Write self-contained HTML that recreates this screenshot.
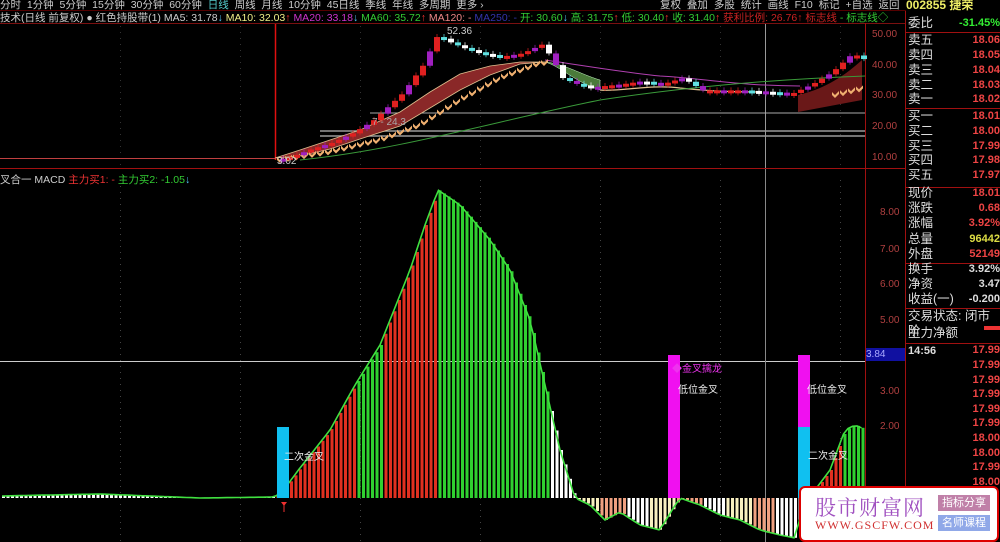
<!DOCTYPE html><html><head><meta charset="utf-8"><style>
*{margin:0;padding:0}body{width:1000px;height:542px;background:#000;overflow:hidden;position:relative;font-family:"Liberation Sans","Noto Sans CJK SC",sans-serif;}
.t{position:absolute;white-space:nowrap;font-size:11px;line-height:12px}
#info div{position:absolute;left:908px;width:92px;font-size:12.5px;color:#ddd;height:15px;line-height:15px}
#info b{position:absolute;right:0;font-weight:bold;font-size:11px}
</style></head><body>
<svg id="s" width="1000" height="542" style="position:absolute;left:0;top:0"></svg>
<div class="t" style="left:0;top:-1px;color:#ccc;font-size:10.5px">分时 &nbsp;1分钟 &nbsp;5分钟 &nbsp;15分钟 &nbsp;30分钟 &nbsp;60分钟 &nbsp;<span style="color:#5cc">日线</span> &nbsp;周线 &nbsp;月线 &nbsp;10分钟 &nbsp;45日线 &nbsp;季线 &nbsp;年线 &nbsp;多周期 &nbsp;更多 ›</div>
<div class="t" style="left:660px;top:-1px;color:#ccc;font-size:10.5px;word-spacing:3px">复权 叠加 多股 统计 画线 F10 标记 +自选 返回</div>
<div class="t" style="left:906px;top:-1px;color:#ee6;font-weight:bold;font-size:12px;background:#000;width:94px">002855 捷荣</div>
<div class="t" style="left:0;top:12px;color:#ccc;font-size:10.5px">技术(日线 前复权) ● 红色持股带(1) MA5: 31.78<span style="color:#5cf">↓</span> <span style="color:#ee8">MA10: 32.03</span><span style="color:#f33">↑</span> <span style="color:#c3c">MA20: 33.18</span><span style="color:#5cf">↓</span> <span style="color:#3c3">MA60: 35.72</span><span style="color:#f33">↑</span> <span style="color:#e88">MA120: -</span> <span style="color:#33a">MA250: -</span> <span style="color:#3c3">开: 30.60</span><span style="color:#5cf">↓</span> <span style="color:#3c3">高: 31.75</span><span style="color:#f33">↑</span> <span style="color:#3c3">低: 30.40</span><span style="color:#f33">↑</span> <span style="color:#3c3">收: 31.40</span><span style="color:#f33">↑</span> <span style="color:#c22">获利比例: 26.76↑ 标志线</span> <span style="color:#3c3">- 标志线◇</span></div>
<div class="t" style="left:0;top:174px;color:#ccc;font-size:10.5px">叉合一 MACD <span style="color:#e33">主力买1: -</span> <span style="color:#3c3">主力买2: -1.05</span><span style="color:#5cf">↓</span></div>
<div class="t" style="left:277px;top:156px;color:#ccc;font-size:10px">3.02</div>
<div class="t" style="left:447px;top:26px;color:#ccc;font-size:10px">52.36</div>
<div class="t" style="left:372px;top:117px;color:#aaa;font-size:10px">7 - 24.3</div>
<div class="t" style="left:284px;top:452px;color:#eee;font-size:10px">二次金叉</div>
<div class="t" style="left:672px;top:364px;color:#e3e;font-size:10px">◆金叉擒龙</div>
<div class="t" style="left:678px;top:385px;color:#eee;font-size:10px">低位金叉</div>
<div class="t" style="left:807px;top:385px;color:#eee;font-size:10px">低位金叉</div>
<div class="t" style="left:808px;top:451px;color:#eee;font-size:10px">二次金叉</div>
<div id="ax"></div>
<div id="info"></div>
<div style="position:absolute;left:799px;top:486px;width:196px;height:52px;background:#fff;border:2px solid #d00;border-radius:6px">
<div style="position:absolute;left:14px;top:4px;font-size:21px;color:#a050c0;font-family:'Noto Serif CJK SC',serif;letter-spacing:1px">股市财富网</div>
<div style="position:absolute;left:14px;top:30px;font-size:12px;color:#d03030;font-family:'Liberation Serif',serif;letter-spacing:1px">WWW.GSCFW.COM</div>
<div style="position:absolute;left:137px;top:7px;width:52px;height:16px;background:#c080a8;color:#fff;font-size:11px;text-align:center;line-height:16px">指标分享</div>
<div style="position:absolute;left:137px;top:27px;width:52px;height:16px;background:#90a8e8;color:#fff;font-size:11px;text-align:center;line-height:16px">名师课程</div>
</div>
<script>
var s=document.getElementById('s'),h='';
function R(x,y,w,hh,c){h+='<rect x="'+x+'" y="'+y+'" width="'+w+'" height="'+hh+'" fill="'+c+'"/>';}
function L(x1,y1,x2,y2,c,w){h+='<line x1="'+x1+'" y1="'+y1+'" x2="'+x2+'" y2="'+y2+'" stroke="'+c+'" stroke-width="'+(w||1)+'"/>';}
function P(d,f,st,w){h+='<path d="'+d+'" fill="'+(f||'none')+'" stroke="'+(st||'none')+'" stroke-width="'+(w||1)+'"/>';}
function interp(pts,x){for(var i=0;i<pts.length-1;i++){if(x>=pts[i][0]&&x<=pts[i+1][0]){var t=(x-pts[i][0])/(pts[i+1][0]-pts[i][0]);return pts[i][1]+t*(pts[i+1][1]-pts[i][1]);}}return pts[pts.length-1][1];}
L(0,23.5,905,23.5,'#7a1010');L(0,168.5,905,168.5,'#a01010');L(865.5,23,865.5,542,'#a01010');L(905.5,10,905.5,542,'#a01010');
L(0,10.5,1000,10.5,'#500');
[32,108,187,263,308,343].forEach(function(y){L(906,y+.5,1000,y+.5,'#a01010');});
for(var gx=120;gx<865;gx+=120)for(var gy=26;gy<168;gy+=6)R(gx,gy,1,1,'#333');
function py(p){return 35+(50-p)*3.075;}
L(275.5,24,275.5,160,'#e01010',1.5);
L(765.5,24,765.5,168,'#999',1);
L(370,113,865,113,'#aaa',1);L(320,131,865,131,'#999',1.5);L(320,136,865,136,'#999',1.5);
var cp=[[0,9.2],[272,9.2],[290,10.5],[310,13],[330,15],[350,18],[370,22],[390,28],[400,31],[420,40],[435,50],[445,48],[460,46],[480,44],[500,43],[520,44],[540,47],[550,42],[560,36],[575,34],[590,33],[620,34],[640,35],[660,34],[680,36],[700,32],[740,32],[790,31],[810,34],[830,38],[850,44],[862,42]];
var b1=[[275,158],[300,150],[330,140],[360,130],[400,112],[430,92],[460,74],[490,66],[520,62],[545,62]];
var b2=[[275,158],[300,156],[330,149],[360,139],[400,126],[430,108],[460,90],[490,75],[520,64],[545,62]];
var d='M'+b1.map(function(p){return p.join(',')}).join(' L')+' L'+b2.slice().reverse().map(function(p){return p.join(',')}).join(' L')+'Z';
P(d,'#8a2828','#e0c090',0.8);
P('M545,62 C560,66 575,82 600,90 L600,80 C580,74 565,64 545,62Z','#4a7a3a','#cfc',0.5);
P('M600,90 C620,92 650,84 680,88 C700,90 720,92 760,92','none','#e0c090',1.2);
P('M545,60 C580,65 620,72 660,76 C700,78 740,86 800,86','none','#b040b0',1);
P('M798,112 L798,95 C820,90 840,80 862,60 L862,100Z','#6a1818','none');
P('M300,160 C400,150 500,120 600,100 C680,88 760,80 865,76','none','#3a9a3a',1);
for(var x=280;x<545;x+=8){var y=interp([[280,160],[330,152],[380,140],[420,125],[460,100],[500,78],[540,63]],x);h+='<path d="M'+(x-3)+','+(y-3)+' L'+x+','+y+' L'+(x+4)+','+(y-4)+' L'+(x+4)+','+(y-1)+' L'+x+','+(y+3)+' L'+(x-3)+','+y+'Z" fill="#f0b070"/>';}
for(var x=835;x<865;x+=8){var y=interp([[835,95],[865,88]],x);h+='<path d="M'+(x-3)+','+(y-3)+' L'+x+','+y+' L'+(x+4)+','+(y-4)+' L'+(x+4)+','+(y-1)+' L'+x+','+(y+3)+' L'+(x-3)+','+y+'Z" fill="#f0b070"/>';}
L(0,158.5,275,158.5,'#c04040',1);
for(var x=280,i=0;x<862;x+=7,i++){var c=interp(cp,x),o=interp(cp,x-7);var yt=py(Math.max(c,o)),yb=py(Math.min(c,o));if(yb-yt<3)yb=yt+3;
 var col=c>=o?(i%3?'#e02020':'#a020c0'):(i%2?'#60e0e0':'#ffffff');if(x>550&&x<800&&i%3==0)col='#a020c0';
 L(x+3,yt-3,x+3,yb+2,col,0.7);R(x,yt,6,yb-yt,col);}
var z=498;
L(0,361.5,865,361.5,'#ccc',1);L(765.5,169,765.5,542,'#888',1);
for(var gx=120;gx<865;gx+=120)for(var gy=180;gy<542;gy+=6)R(gx,gy,1,1,'#444');
var env=[[0,496],[100,494],[200,498],[275,497],[285,488],[300,468],[330,430],[355,385],[380,345],[410,270],[425,225],[438,190],[460,205],[490,240],[510,270],[530,320],[545,385],[560,450],[575,498],[590,505],[605,520],[620,512],[640,525],[660,530],[672,510],[680,498],[700,505],[720,515],[740,520],[760,530],[780,535],[795,538],[805,498],[815,490],[830,470],[845,430],[855,425],[862,428]];
var pl='';
for(var x=2;x<864;x+=4.5){var y=interp(env,x);pl+=(pl?' L':'M')+x.toFixed(1)+','+y.toFixed(1);var c;
 if(x<275)c=(Math.floor(x/40)%2)?'#e04040':'#30c030';
 else if(x<355)c='#e03020';else if(x<382)c='#30d030';else if(x<437)c='#e03020';else if(x<550)c='#30d030';else if(x<577)c='#ffffff';
 else if(x>815){c=(x<840)?'#e03020':'#30d030';}
 else c=(Math.floor(x/25)%3==0)?'#f0a080':((Math.floor(x/25)%3==1)?'#ffffff':'#f8f0c0');
 var t=Math.min(y,z),bh=Math.abs(y-z);if(x<275)c=(y>z)?'#e04040':'#ffffff';if(bh>0.5)R(x,t,3,bh,c);}
P(pl,'none','#40e040',1.6);
R(277,427,12,71,'#10c0f0');R(668,355,12,143,'#f010f0');R(798,355,12,72,'#f010f0');R(798,427,12,71,'#10c0f0');
P('M281,502 L284,506 L287,502Z','#f03030');L(284,505,284,512,'#f03030',1);
s.innerHTML=h;
var ax='';
[[50,35],[40,66],[30,96],[20,127],[10,158]].forEach(function(a){ax+='<div class="t" style="left:872px;top:'+(a[1]-6)+'px;color:#b04040;font-size:10px">'+a[0].toFixed(2)+'</div>';});
[['8.00',213],['7.00',250],['6.00',285],['5.00',321],['3.00',392],['2.00',427]].forEach(function(a){ax+='<div class="t" style="left:880px;top:'+(a[1]-6)+'px;color:#b04040;font-size:10px">'+a[0]+'</div>';});
ax+='<div class="t" style="left:866px;top:348px;width:39px;height:13px;background:#1010a0;color:#aaf;font-size:10px;line-height:13px">3.84</div>';
document.getElementById('ax').innerHTML=ax;
var rows=[['委比','-31.45%','#3e3',24],['卖五','18.06','#e44',41],['卖四','18.05','#e44',56],['卖三','18.04','#e44',71],['卖二','18.03','#e44',86],['卖一','18.02','#e44',100],['买一','18.01','#e44',117],['买二','18.00','#e44',132],['买三','17.99','#e44',147],['买四','17.98','#e44',161],['买五','17.97','#e44',176],['现价','18.01','#e44',194],['涨跌','0.68','#e44',209],['涨幅','3.92%','#e44',224],['总量','96442','#dd4',240],['外盘','52149','#e44',255],['换手','3.92%','#ddd',270],['净资','3.47','#ddd',285],['收益(一)','-0.200','#ddd',300],['交易状态: 闭市阶','','#ddd',317],['主力净额','','#ddd',334],['<span style="font-size:11px;font-weight:bold">14:56</span>','17.99','#e44',351]];
var v=['17.99','17.99','17.99','17.99','17.99','18.00','18.00','17.99','18.00'];
v.forEach(function(p,i){rows.push(['',p,'#e44',366+i*14.6]);});
var ih='';rows.forEach(function(r){ih+='<div style="top:'+(r[3]-8)+'px">'+r[0]+'<b style="color:'+r[2]+'">'+r[1]+'</b></div>';});
ih+='<div style="top:326px;left:984px;width:16px;height:4px;background:#e33"></div>';
document.getElementById('info').innerHTML=ih;
</script>
</body></html>
